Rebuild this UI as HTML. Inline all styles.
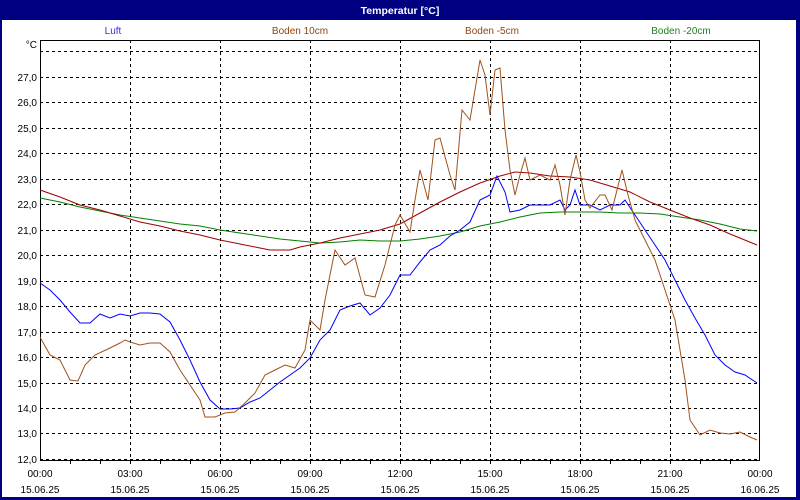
<!DOCTYPE html>
<html><head><meta charset="utf-8"><style>
html,body{margin:0;padding:0;width:800px;height:500px;overflow:hidden;background:#fff}
svg{display:block}
text{font-family:"Liberation Sans",sans-serif;font-size:10px}
</style></head><body>
<svg width="800" height="500" viewBox="0 0 800 500">
<rect x="0" y="0" width="800" height="500" fill="#000080"/>
<rect x="2" y="20" width="794" height="477" fill="#fff"/>
<text x="400" y="14" fill="#fff" text-anchor="middle" font-weight="bold" style="font-size:10.5px">Temperatur [°C]</text>
<text x="113" y="34" fill="#3030e0" text-anchor="middle">Luft</text>
<text x="300" y="34" fill="#8b4513" text-anchor="middle">Boden 10cm</text>
<text x="492" y="34" fill="#8b4513" text-anchor="middle">Boden -5cm</text>
<text x="681" y="34" fill="#208020" text-anchor="middle">Boden -20cm</text>
<g stroke="#000" stroke-dasharray="3,3" stroke-width="1" shape-rendering="crispEdges">
<line x1="40" y1="51.5" x2="760" y2="51.5"/>
<line x1="40" y1="77.5" x2="760" y2="77.5"/>
<line x1="40" y1="102.5" x2="760" y2="102.5"/>
<line x1="40" y1="128.5" x2="760" y2="128.5"/>
<line x1="40" y1="153.5" x2="760" y2="153.5"/>
<line x1="40" y1="179.5" x2="760" y2="179.5"/>
<line x1="40" y1="204.5" x2="760" y2="204.5"/>
<line x1="40" y1="230.5" x2="760" y2="230.5"/>
<line x1="40" y1="255.5" x2="760" y2="255.5"/>
<line x1="40" y1="281.5" x2="760" y2="281.5"/>
<line x1="40" y1="306.5" x2="760" y2="306.5"/>
<line x1="40" y1="332.5" x2="760" y2="332.5"/>
<line x1="40" y1="357.5" x2="760" y2="357.5"/>
<line x1="40" y1="383.5" x2="760" y2="383.5"/>
<line x1="40" y1="408.5" x2="760" y2="408.5"/>
<line x1="40" y1="433.5" x2="760" y2="433.5"/>
<line x1="40" y1="459.5" x2="760" y2="459.5"/>
<line x1="130.5" y1="40" x2="130.5" y2="460"/>
<line x1="220.5" y1="40" x2="220.5" y2="460"/>
<line x1="310.5" y1="40" x2="310.5" y2="460"/>
<line x1="400.5" y1="40" x2="400.5" y2="460"/>
<line x1="490.5" y1="40" x2="490.5" y2="460"/>
<line x1="580.5" y1="40" x2="580.5" y2="460"/>
<line x1="670.5" y1="40" x2="670.5" y2="460"/>
</g>
<rect x="40.5" y="40.5" width="719" height="420" fill="none" stroke="#000" shape-rendering="crispEdges"/>
<g stroke="#000" shape-rendering="crispEdges">
<line x1="70.5" y1="460" x2="70.5" y2="464"/><line x1="100.5" y1="460" x2="100.5" y2="464"/><line x1="130.5" y1="460" x2="130.5" y2="464"/><line x1="160.5" y1="460" x2="160.5" y2="464"/><line x1="190.5" y1="460" x2="190.5" y2="464"/><line x1="220.5" y1="460" x2="220.5" y2="464"/><line x1="250.5" y1="460" x2="250.5" y2="464"/><line x1="280.5" y1="460" x2="280.5" y2="464"/><line x1="310.5" y1="460" x2="310.5" y2="464"/><line x1="340.5" y1="460" x2="340.5" y2="464"/><line x1="370.5" y1="460" x2="370.5" y2="464"/><line x1="400.5" y1="460" x2="400.5" y2="464"/><line x1="430.5" y1="460" x2="430.5" y2="464"/><line x1="460.5" y1="460" x2="460.5" y2="464"/><line x1="490.5" y1="460" x2="490.5" y2="464"/><line x1="520.5" y1="460" x2="520.5" y2="464"/><line x1="550.5" y1="460" x2="550.5" y2="464"/><line x1="580.5" y1="460" x2="580.5" y2="464"/><line x1="610.5" y1="460" x2="610.5" y2="464"/><line x1="640.5" y1="460" x2="640.5" y2="464"/><line x1="670.5" y1="460" x2="670.5" y2="464"/><line x1="700.5" y1="460" x2="700.5" y2="464"/><line x1="730.5" y1="460" x2="730.5" y2="464"/>
</g>
<g fill="#000" text-anchor="end">
<text x="37" y="48">°C</text>
<text x="37" y="81">27,0</text><text x="37" y="106">26,0</text><text x="37" y="132">25,0</text><text x="37" y="157">24,0</text><text x="37" y="183">23,0</text><text x="37" y="208">22,0</text><text x="37" y="234">21,0</text><text x="37" y="259">20,0</text><text x="37" y="285">19,0</text><text x="37" y="310">18,0</text><text x="37" y="336">17,0</text><text x="37" y="361">16,0</text><text x="37" y="387">15,0</text><text x="37" y="412">14,0</text><text x="37" y="437">13,0</text><text x="37" y="463">12,0</text>
</g>
<g fill="#000" text-anchor="middle">
<text x="40" y="477">00:00</text><text x="130" y="477">03:00</text><text x="220" y="477">06:00</text><text x="310" y="477">09:00</text><text x="400" y="477">12:00</text><text x="490" y="477">15:00</text><text x="580" y="477">18:00</text><text x="670" y="477">21:00</text><text x="760" y="477">00:00</text>
<text x="40" y="493">15.06.25</text><text x="130" y="493">15.06.25</text><text x="220" y="493">15.06.25</text><text x="310" y="493">15.06.25</text><text x="400" y="493">15.06.25</text><text x="490" y="493">15.06.25</text><text x="580" y="493">15.06.25</text><text x="670" y="493">15.06.25</text><text x="760" y="493">16.06.25</text>
</g>
<g fill="none" stroke-width="1">
<polyline stroke="#008000" points="40,198 60,202 80,207 100,211 120,215 140,218 160,221 180,224 200,226 220,230 240,233 260,236 280,239 300,241 320,243 340,242 360,240 380,241 400,241 420,239 440,236 460,232 480,226 500,222 520,217 540,213 560,212 580,212 600,212 620,213 640,213 660,214 680,217 700,220 720,224 740,229 757,231"/>
<polyline stroke="#a00000" points="40,190 60,197 80,205 100,210 120,216 140,222 160,226 180,231 200,235 220,240 240,244 260,248 270,250 290,250 300,247 320,243 340,238 360,234 380,230 400,224 420,213 440,202 460,192 480,183 500,176 515,172 530,173 550,176 570,177 590,180 610,186 630,192 650,202 670,210 690,218 710,225 730,234 757,245"/>
<polyline stroke="#0000ff" points="40,283 50,290 60,300 70,312 80,323 90,323 100,314 110,318 120,314 130,316 140,313 150,313 160,314 170,322 180,340 190,360 200,382 210,400 220,409 230,409 240,408 250,402 260,398 270,390 280,382 290,375 300,368 310,358 320,340 330,330 340,310 350,306 360,303 370,315 380,308 390,295 400,275 410,275 420,262 430,250 440,245 450,236 460,230 470,222 480,200 490,195 497,176 505,192 510,212 520,210 530,205 540,205 550,205 560,200 565,210 570,205 575,190 580,205 590,205 600,210 610,205 620,205 625,200 635,215 645,230 655,245 665,260 675,280 685,300 695,318 705,335 715,355 725,365 735,372 745,375 757,383"/>
<polyline stroke="#a0521e" points="40,337 50,355 60,360 70,380 78,381 85,365 95,355 110,348 120,343 125,340 130,342 140,345 150,343 160,343 170,352 180,370 190,385 200,400 205,417 215,417 225,413 235,412 245,403 255,393 265,375 275,370 285,365 295,368 305,350 310,320 320,330 325,300 335,250 345,265 355,258 365,295 375,297 385,265 395,225 400,215 410,232 415,200 420,170 428,200 435,140 440,138 450,175 455,190 462,110 470,120 480,60 485,75 490,115 495,70 500,68 505,130 510,170 515,195 520,175 525,158 530,180 540,175 550,180 555,165 560,185 565,215 570,180 576,155 580,172 585,200 590,208 600,195 605,195 612,210 622,170 628,195 635,220 645,240 655,260 665,290 675,320 680,350 685,380 690,420 700,435 710,430 720,433 730,434 740,432 750,437 757,440"/>
</g>
</svg>
</body></html>
